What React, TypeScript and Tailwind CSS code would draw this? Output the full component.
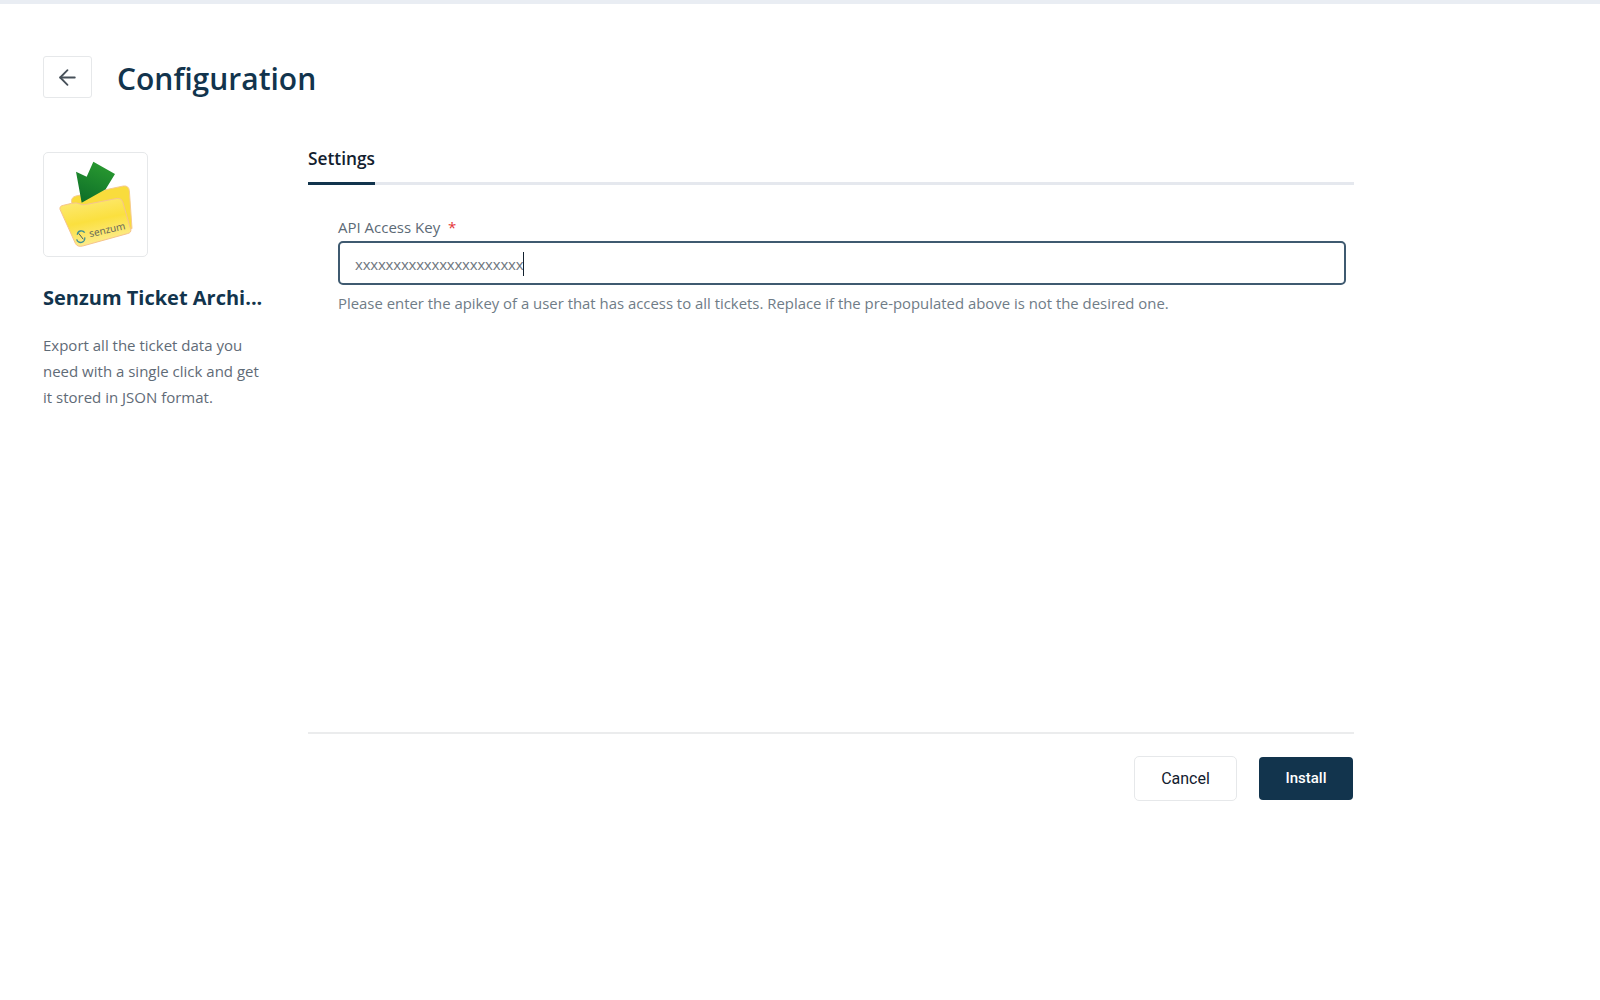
import { ArrowLeft } from "lucide-react";

// coordinates are taken from a 3x view of the icon card
function FolderLogo() {
  return (
    <svg width="103" height="103" viewBox="12 9 309 309">
      <defs>
        <linearGradient id="folderFront" x1="0" y1="0" x2="0.3" y2="1">
          <stop offset="0" stopColor="#fdeb7c" />
          <stop offset="0.55" stopColor="#fbe03f" />
          <stop offset="1" stopColor="#fdeb8a" />
        </linearGradient>
        <linearGradient id="arrowFill" x1="0.7" y1="0" x2="0.3" y2="1">
          <stop offset="0" stopColor="#2a9a30" />
          <stop offset="1" stopColor="#0e7029" />
        </linearGradient>
      </defs>
      {/* back flap */}
      <path d="M95 158 Q92 142 108 138 L250 108 Q266 106 268 122 L276 236 L200 250 Z" fill="#f9dc3c" stroke="#f6cb8e" strokeWidth="3" />
      {/* arrow */}
      <path d="M160 35 L225 72 L197 118 L125 158 L108 65 L140 80 Z" fill="url(#arrowFill)" />
      {/* front */}
      <path d="M60 178 Q58 168 70 166 L95 160 Q110 156 120 162 Q128 166 140 163 L232 145 Q244 144 248 155 L272 238 Q275 248 262 251 L128 288 Q112 292 106 280 Z" fill="url(#folderFront)" stroke="#f6c48c" strokeWidth="3" />
      <path d="M134 248 A12 12 0 0 0 112 254 M110 268 A12 12 0 0 0 134 262" fill="none" stroke="#3d8f93" strokeWidth="4" />
      <path d="M116 250 L130 268" stroke="#4c5a5c" strokeWidth="3" />
      <text x="150" y="262" fontSize="30" fontFamily="'Noto Sans', sans-serif" fill="#6a6a58" transform="rotate(-13 150 262)">senzum</text>
    </svg>
  );
}

export default function App() {
  return (
    <div className="min-h-screen bg-white font-['Open_Sans','Noto_Sans',sans-serif]">
      <div className="h-[4px] bg-[#e9edf3]" />

      <div className="px-[43px]">
        {/* Header */}
        <div className="flex items-center pt-[52px]">
          <button className="flex h-[42px] w-[49px] items-center justify-center rounded-[3px] border border-[#e6e8ea] bg-white text-[#475059]">
            <ArrowLeft size={25} strokeWidth={1.75} />
          </button>
          <h1 className="relative top-[2px] ml-[25px] text-[30px] leading-[42px] font-semibold text-[#12344d]">Configuration</h1>
        </div>

        <div className="mt-[54px] flex">
          {/* App info */}
          <div className="w-[222px] shrink-0">
            <div className="flex h-[105px] w-[105px] items-center justify-center overflow-hidden rounded-[5px] border border-[#e6e8ea]">
              <FolderLogo />
            </div>
            <div className="mt-[28px] truncate text-[20px] leading-[26px] font-bold text-[#12344d]">
              Senzum Ticket Archi...
            </div>
            <p className="mt-[21px] pr-[2px] text-[15px] leading-[26px] text-[#5f6b77]">
              Export all the ticket data you need with a single click and get it stored in JSON format.
            </p>
          </div>

          {/* Settings */}
          <div className="ml-[43px] w-[1046px]">
            <div className="flex h-[33px] border-b-[3px] border-[#e5e8ee]">
              <div className="-mb-[3px] h-[33px] border-b-[3px] border-[#12344d] text-[17.3px] leading-[14px] font-semibold text-[#12202e]">
                Settings
              </div>
            </div>

            <div className="h-[549px] border-b-2 border-[#ebeced] pt-[31px] pl-[30px] pr-[8px]">
              <label className="block text-[15px] leading-[22px] text-[#5c6a76]">
                API Access Key <span className="ml-[4px] text-[#e43538]">*</span>
              </label>
              <div className="mt-[3px] flex h-[44px] items-center rounded-[5px] border-2 border-[#3f5a70] pl-[15px]">
                <span className="relative top-[1px] text-[15px] tracking-[-0.2px] text-[#6f7780]">xxxxxxxxxxxxxxxxxxxxxx</span>
                <span className="relative top-[1px] h-[24px] w-px bg-[#12202e]" />
              </div>
              <p className="mt-[7px] text-[14.9px] leading-[22px] text-[#6f7c87]">
                Please enter the apikey of a user that has access to all tickets. Replace if the pre-populated above is not the desired one.
              </p>
            </div>

            <div className="flex items-center justify-end gap-[22px] pt-[22px] pr-[1px] font-['Roboto',sans-serif] text-[16px]">
              <button className="h-[45px] w-[103px] rounded-[5px] border border-[#e6e8ea] bg-white text-[#12202e]">Cancel</button>
              <button className="h-[43px] w-[94px] rounded-[4px] bg-[#12344d] text-[15px] font-medium text-white">Install</button>
            </div>
          </div>
        </div>
      </div>
    </div>
  );
}
